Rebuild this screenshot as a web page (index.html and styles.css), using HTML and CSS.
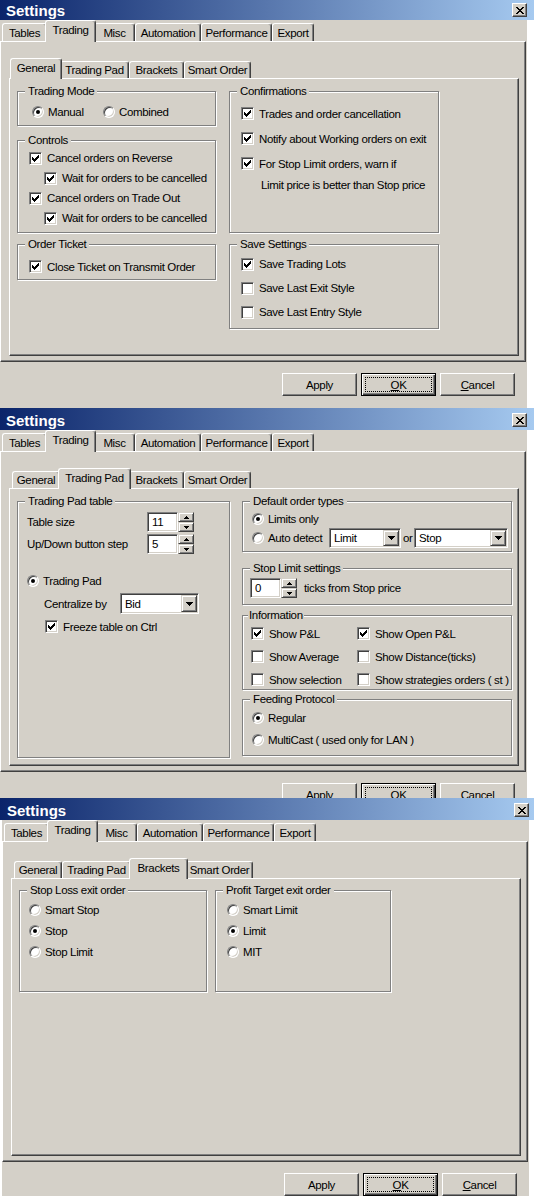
FILE: index.html
```html
<!DOCTYPE html>
<html lang="en">
<head>
<meta charset="utf-8">
<title>Settings</title>
<link rel="stylesheet" href="styles.css">
</head>
<body>

<!-- ================= WINDOW 1 : General ================= -->
<section class="win w1">
  <header class="titlebar">
    <span class="title">Settings</span>
    <span class="close"><svg width="8" height="7" viewBox="0 0 8 7" shape-rendering="crispEdges"><path d="M0 0h2v1H0zM6 0h2v1H6zM1 1h2v1H1zM5 1h2v1H5zM2 2h4v1H2zM3 3h2v1H3zM2 4h4v1H2zM1 5h2v1H1zM5 5h2v1H5zM0 6h2v1H0zM6 6h2v1H6z"/></svg></span>
  </header>
  <div class="wbody">
    <nav class="tabstrip main">
      <div class="tab t-tables">Tables</div>
      <div class="tab t-trading sel">Trading</div>
      <div class="tab t-misc">Misc</div>
      <div class="tab t-automation">Automation</div>
      <div class="tab t-performance">Performance</div>
      <div class="tab t-export">Export</div>
    </nav>
    <div class="panel outer">
      <nav class="tabstrip sub">
        <div class="tab t-general sel">General</div>
        <div class="tab t-pad">Trading Pad</div>
        <div class="tab t-brackets">Brackets</div>
        <div class="tab t-smart">Smart Order</div>
      </nav>
      <div class="panel inner general">
        <div class="col">
          <div class="group g-mode">
            <div class="glabel">Trading Mode</div>
            <div class="gbody">
              <div class="row">
                <div class="opt opt-manual"><span class="rb on"></span>Manual</div>
                <div class="opt"><span class="rb"></span>Combined</div>
              </div>
            </div>
          </div>
          <div class="group g-controls">
            <div class="glabel">Controls</div>
            <div class="gbody">
              <div class="row"><span class="cb"><svg width="7" height="7" viewBox="0 0 7 7" shape-rendering="crispEdges"><path d="M0 2h1v3H0zM1 3h1v3H1zM2 4h1v3H2zM3 3h1v3H3zM4 2h1v3H4zM5 1h1v3H5zM6 0h1v3H6z"/></svg></span>Cancel orders on Reverse</div>
              <div class="row sub1"><span class="cb"><svg width="7" height="7" viewBox="0 0 7 7" shape-rendering="crispEdges"><path d="M0 2h1v3H0zM1 3h1v3H1zM2 4h1v3H2zM3 3h1v3H3zM4 2h1v3H4zM5 1h1v3H5zM6 0h1v3H6z"/></svg></span>Wait for orders to be cancelled</div>
              <div class="row"><span class="cb"><svg width="7" height="7" viewBox="0 0 7 7" shape-rendering="crispEdges"><path d="M0 2h1v3H0zM1 3h1v3H1zM2 4h1v3H2zM3 3h1v3H3zM4 2h1v3H4zM5 1h1v3H5zM6 0h1v3H6z"/></svg></span>Cancel orders on Trade Out</div>
              <div class="row sub1"><span class="cb"><svg width="7" height="7" viewBox="0 0 7 7" shape-rendering="crispEdges"><path d="M0 2h1v3H0zM1 3h1v3H1zM2 4h1v3H2zM3 3h1v3H3zM4 2h1v3H4zM5 1h1v3H5zM6 0h1v3H6z"/></svg></span>Wait for orders to be cancelled</div>
            </div>
          </div>
          <div class="group g-ticket">
            <div class="glabel">Order Ticket</div>
            <div class="gbody">
              <div class="row"><span class="cb"><svg width="7" height="7" viewBox="0 0 7 7" shape-rendering="crispEdges"><path d="M0 2h1v3H0zM1 3h1v3H1zM2 4h1v3H2zM3 3h1v3H3zM4 2h1v3H4zM5 1h1v3H5zM6 0h1v3H6z"/></svg></span>Close Ticket on Transmit Order</div>
            </div>
          </div>
        </div>
        <div class="col">
          <div class="group g-confirm">
            <div class="glabel">Confirmations</div>
            <div class="gbody">
              <div class="row"><span class="cb"><svg width="7" height="7" viewBox="0 0 7 7" shape-rendering="crispEdges"><path d="M0 2h1v3H0zM1 3h1v3H1zM2 4h1v3H2zM3 3h1v3H3zM4 2h1v3H4zM5 1h1v3H5zM6 0h1v3H6z"/></svg></span>Trades and order cancellation</div>
              <div class="row"><span class="cb"><svg width="7" height="7" viewBox="0 0 7 7" shape-rendering="crispEdges"><path d="M0 2h1v3H0zM1 3h1v3H1zM2 4h1v3H2zM3 3h1v3H3zM4 2h1v3H4zM5 1h1v3H5zM6 0h1v3H6z"/></svg></span>Notify about Working orders on exit</div>
              <div class="row"><span class="cb"><svg width="7" height="7" viewBox="0 0 7 7" shape-rendering="crispEdges"><path d="M0 2h1v3H0zM1 3h1v3H1zM2 4h1v3H2zM3 3h1v3H3zM4 2h1v3H4zM5 1h1v3H5zM6 0h1v3H6z"/></svg></span>For Stop Limit orders, warn if</div>
              <div class="row note">Limit price is better than Stop price</div>
            </div>
          </div>
          <div class="group g-save">
            <div class="glabel">Save Settings</div>
            <div class="gbody">
              <div class="row"><span class="cb"><svg width="7" height="7" viewBox="0 0 7 7" shape-rendering="crispEdges"><path d="M0 2h1v3H0zM1 3h1v3H1zM2 4h1v3H2zM3 3h1v3H3zM4 2h1v3H4zM5 1h1v3H5zM6 0h1v3H6z"/></svg></span>Save Trading Lots</div>
              <div class="row"><span class="cb"></span>Save Last Exit Style</div>
              <div class="row"><span class="cb"></span>Save Last Entry Style</div>
            </div>
          </div>
        </div>
      </div>
    </div>
    <div class="btnrow">
      <div class="btn">Apply</div>
      <div class="btn default"><span class="focus"><u>O</u>K</span></div>
      <div class="btn"><u>C</u>ancel</div>
    </div>
  </div>
</section>

<!-- ================= WINDOW 2 : Trading Pad ================= -->
<section class="win w2">
  <header class="titlebar">
    <span class="title">Settings</span>
    <span class="close"><svg width="8" height="7" viewBox="0 0 8 7" shape-rendering="crispEdges"><path d="M0 0h2v1H0zM6 0h2v1H6zM1 1h2v1H1zM5 1h2v1H5zM2 2h4v1H2zM3 3h2v1H3zM2 4h4v1H2zM1 5h2v1H1zM5 5h2v1H5zM0 6h2v1H0zM6 6h2v1H6z"/></svg></span>
  </header>
  <div class="wbody">
    <nav class="tabstrip main">
      <div class="tab t-tables">Tables</div>
      <div class="tab t-trading sel">Trading</div>
      <div class="tab t-misc">Misc</div>
      <div class="tab t-automation">Automation</div>
      <div class="tab t-performance">Performance</div>
      <div class="tab t-export">Export</div>
    </nav>
    <div class="panel outer">
      <nav class="tabstrip sub">
        <div class="tab t-general">General</div>
        <div class="tab t-pad sel">Trading Pad</div>
        <div class="tab t-brackets">Brackets</div>
        <div class="tab t-smart">Smart Order</div>
      </nav>
      <div class="panel inner pad">
        <div class="col">
          <div class="group g-pad">
            <div class="glabel">Trading Pad table</div>
            <div class="gbody">
              <div class="row field">
                <span class="flabel">Table size</span>
                <div class="spin">
                  <div class="edit">11</div>
                  <div class="sbtns">
                    <div class="sbtn"><svg width="5" height="3" viewBox="0 0 5 3" shape-rendering="crispEdges"><path d="M2 0h1v1H2zM1 1h3v1H1zM0 2h5v1H0z"/></svg></div>
                    <div class="sbtn"><svg width="5" height="3" viewBox="0 0 5 3" shape-rendering="crispEdges"><path d="M0 0h5v1H0zM1 1h3v1H1zM2 2h1v1H2z"/></svg></div>
                  </div>
                </div>
              </div>
              <div class="row field">
                <span class="flabel">Up/Down button step</span>
                <div class="spin">
                  <div class="edit">5</div>
                  <div class="sbtns">
                    <div class="sbtn"><svg width="5" height="3" viewBox="0 0 5 3" shape-rendering="crispEdges"><path d="M2 0h1v1H2zM1 1h3v1H1zM0 2h5v1H0z"/></svg></div>
                    <div class="sbtn"><svg width="5" height="3" viewBox="0 0 5 3" shape-rendering="crispEdges"><path d="M0 0h5v1H0zM1 1h3v1H1zM2 2h1v1H2z"/></svg></div>
                  </div>
                </div>
              </div>
              <div class="row radio-row"><span class="rb on"></span>Trading Pad</div>
              <div class="row central">
                <span class="flabel2">Centralize by</span>
                <div class="combo c-bid"><span class="val">Bid</span><span class="dd"><svg width="7" height="4" viewBox="0 0 7 4" shape-rendering="crispEdges"><path d="M0 0h7v1H0zM1 1h5v1H1zM2 2h3v1H2zM3 3h1v1H3z"/></svg></span></div>
              </div>
              <div class="row freeze"><span class="cb"><svg width="7" height="7" viewBox="0 0 7 7" shape-rendering="crispEdges"><path d="M0 2h1v3H0zM1 3h1v3H1zM2 4h1v3H2zM3 3h1v3H3zM4 2h1v3H4zM5 1h1v3H5zM6 0h1v3H6z"/></svg></span>Freeze table on Ctrl</div>
            </div>
          </div>
        </div>
        <div class="col">
          <div class="group g-default">
            <div class="glabel">Default order types</div>
            <div class="gbody">
              <div class="row r1"><span class="rb on"></span>Limits only</div>
              <div class="row r2">
                <div class="opt opt-auto"><span class="rb"></span>Auto detect</div>
                <div class="combo c-limit"><span class="val">Limit</span><span class="dd"><svg width="7" height="4" viewBox="0 0 7 4" shape-rendering="crispEdges"><path d="M0 0h7v1H0zM1 1h5v1H1zM2 2h3v1H2zM3 3h1v1H3z"/></svg></span></div>
                <span class="or">or</span>
                <div class="combo c-stop"><span class="val">Stop</span><span class="dd"><svg width="7" height="4" viewBox="0 0 7 4" shape-rendering="crispEdges"><path d="M0 0h7v1H0zM1 1h5v1H1zM2 2h3v1H2zM3 3h1v1H3z"/></svg></span></div>
              </div>
            </div>
          </div>
          <div class="group g-stoplimit">
            <div class="glabel">Stop Limit settings</div>
            <div class="gbody">
              <div class="row">
                <div class="spin">
                  <div class="edit">0</div>
                  <div class="sbtns">
                    <div class="sbtn"><svg width="5" height="3" viewBox="0 0 5 3" shape-rendering="crispEdges"><path d="M2 0h1v1H2zM1 1h3v1H1zM0 2h5v1H0z"/></svg></div>
                    <div class="sbtn"><svg width="5" height="3" viewBox="0 0 5 3" shape-rendering="crispEdges"><path d="M0 0h5v1H0zM1 1h3v1H1zM2 2h1v1H2z"/></svg></div>
                  </div>
                </div>
                <span class="ticks">ticks from Stop price</span>
              </div>
            </div>
          </div>
          <div class="group g-info">
            <div class="glabel tight">Information</div>
            <div class="gbody">
              <div class="row">
                <div class="opt icol"><span class="cb"><svg width="7" height="7" viewBox="0 0 7 7" shape-rendering="crispEdges"><path d="M0 2h1v3H0zM1 3h1v3H1zM2 4h1v3H2zM3 3h1v3H3zM4 2h1v3H4zM5 1h1v3H5zM6 0h1v3H6z"/></svg></span>Show P&amp;L</div>
                <div class="opt"><span class="cb"><svg width="7" height="7" viewBox="0 0 7 7" shape-rendering="crispEdges"><path d="M0 2h1v3H0zM1 3h1v3H1zM2 4h1v3H2zM3 3h1v3H3zM4 2h1v3H4zM5 1h1v3H5zM6 0h1v3H6z"/></svg></span>Show Open P&amp;L</div>
              </div>
              <div class="row">
                <div class="opt icol"><span class="cb"></span>Show Average</div>
                <div class="opt"><span class="cb"></span>Show Distance(ticks)</div>
              </div>
              <div class="row">
                <div class="opt icol"><span class="cb"></span>Show selection</div>
                <div class="opt"><span class="cb"></span>Show strategies orders ( st )</div>
              </div>
            </div>
          </div>
          <div class="group g-feed">
            <div class="glabel">Feeding Protocol</div>
            <div class="gbody">
              <div class="row"><span class="rb on"></span>Regular</div>
              <div class="row"><span class="rb"></span>MultiCast ( used only for LAN )</div>
            </div>
          </div>
        </div>
      </div>
    </div>
    <div class="btnrow">
      <div class="btn">Apply</div>
      <div class="btn default"><span class="focus"><u>O</u>K</span></div>
      <div class="btn"><u>C</u>ancel</div>
    </div>
  </div>
</section>

<!-- ================= WINDOW 3 : Brackets ================= -->
<section class="win w3">
  <header class="titlebar">
    <span class="title">Settings</span>
    <span class="close"><svg width="8" height="7" viewBox="0 0 8 7" shape-rendering="crispEdges"><path d="M0 0h2v1H0zM6 0h2v1H6zM1 1h2v1H1zM5 1h2v1H5zM2 2h4v1H2zM3 3h2v1H3zM2 4h4v1H2zM1 5h2v1H1zM5 5h2v1H5zM0 6h2v1H0zM6 6h2v1H6z"/></svg></span>
  </header>
  <div class="wbody">
    <nav class="tabstrip main">
      <div class="tab t-tables">Tables</div>
      <div class="tab t-trading sel">Trading</div>
      <div class="tab t-misc">Misc</div>
      <div class="tab t-automation">Automation</div>
      <div class="tab t-performance">Performance</div>
      <div class="tab t-export">Export</div>
    </nav>
    <div class="panel outer">
      <nav class="tabstrip sub">
        <div class="tab t-general">General</div>
        <div class="tab t-pad">Trading Pad</div>
        <div class="tab t-brackets sel">Brackets</div>
        <div class="tab t-smart">Smart Order</div>
      </nav>
      <div class="panel inner brackets">
        <div class="group g-sl">
          <div class="glabel">Stop Loss exit order</div>
          <div class="gbody">
            <div class="row"><span class="rb"></span>Smart Stop</div>
            <div class="row"><span class="rb on"></span>Stop</div>
            <div class="row"><span class="rb"></span>Stop Limit</div>
          </div>
        </div>
        <div class="group g-pt">
          <div class="glabel">Profit Target exit order</div>
          <div class="gbody">
            <div class="row"><span class="rb"></span>Smart Limit</div>
            <div class="row"><span class="rb on"></span>Limit</div>
            <div class="row"><span class="rb"></span>MIT</div>
          </div>
        </div>
      </div>
    </div>
    <div class="btnrow">
      <div class="btn">Apply</div>
      <div class="btn default"><span class="focus"><u>O</u>K</span></div>
      <div class="btn"><u>C</u>ancel</div>
    </div>
  </div>
</section>

</body>
</html>
```

FILE: styles.css
```css
* { box-sizing: border-box; }

html, body { margin: 0; padding: 0; }

body {
  width: 534px;
  height: 1196px;
  overflow: hidden;
  background: #ffffff;
  color: #000000;
  font-family: "Liberation Sans", Arial, sans-serif;
  font-size: 11.5px;
  letter-spacing: -0.35px;
}

/* ---------- windows ---------- */
.win { width: 534px; height: 410px; overflow: hidden; }
.w1 { margin-top: -2px; }
.w2 { height: 390px; }
.w3 { height: 398px; }

.titlebar {
  height: 22px;
  display: flex;
  justify-content: space-between;
  align-items: flex-start;
  padding: 0 7px 0 6px;
  background: linear-gradient(to right, #0a246a 0%, #a6caf0 100%);
  overflow: hidden;
}
.w3 .titlebar { padding-right: 5px; padding-left: 7px; }

.title {
  color: #ffffff;
  font-family: "Liberation Sans", Arial, sans-serif;
  font-weight: bold;
  font-size: 15px;
  letter-spacing: 0;
  line-height: 24px;
  padding-top: 1px;
}

.close {
  margin-top: 5px;
  width: 15px;
  height: 14px;
  background: #d4d0c8;
  border: 1px solid;
  border-color: #ffffff #404040 #404040 #ffffff;
  box-shadow: inset -1px -1px 0 #808080;
  display: flex;
  align-items: center;
  justify-content: center;
}
.close svg, .cb svg, .dd svg, .sbtn svg { display: block; }

.wbody { width: 527px; height: 388px; background: #d4d0c8; }
.w3 .wbody { margin-left: 2px; }

/* ---------- tabs ---------- */
.tabstrip { display: flex; align-items: flex-end; }
.tabstrip.main { height: 21px; padding-left: 2px; }
.tabstrip.sub { height: 20px; padding-left: 3px; }

.tab {
  box-sizing: content-box;
  flex: none;
  background: #d4d0c8;
  border: 1px solid;
  border-bottom: 0;
  border-color: #ffffff #404040 #d4d0c8 #ffffff;
  border-radius: 3px 3px 0 0;
  box-shadow: inset -1px 0 0 #808080;
  text-align: center;
  white-space: nowrap;
}
.main .tab { height: 17px; line-height: 18px; }
.sub .tab { height: 16px; line-height: 16px; }

.tab.sel { position: relative; z-index: 1; margin: 0 -2px -1px; padding: 0 2px; }
.main .tab.sel { height: 21px; line-height: 19px; }
.sub .tab.sel { height: 20px; line-height: 19px; }

.t-tables { width: 43px; }
.t-trading { width: 45px; }
.t-misc { width: 39px; }
.t-automation { width: 64px; }
.t-performance { width: 69px; }
.t-export { width: 40px; }

.t-general { width: 46px; }
.t-pad { width: 67px; }
.t-brackets { width: 53px; }
.t-smart { width: 65px; }

/* ---------- panels ---------- */
.panel {
  border: 1px solid;
  border-color: #ffffff #404040 #404040 #ffffff;
  box-shadow: inset -1px -1px 0 #808080;
}
.outer { width: 526px; height: 321px; padding: 16px 6px 5px 8px; }
.inner { width: 510px; height: 278px; padding: 12px 0 0 7px; }

.general { display: grid; grid-template-columns: 199px 210px; column-gap: 13px; align-items: start; }
.pad { display: grid; grid-template-columns: 213px 270px; column-gap: 12px; align-items: start; }
.brackets { display: flex; gap: 8px; align-items: flex-start; padding-top: 11px; }

.col { display: flex; flex-direction: column; }

/* ---------- group boxes ---------- */
.group {
  border: 1px solid #808080;
  box-shadow: inset 1px 1px 0 #ffffff, 1px 1px 0 #ffffff;
}
.glabel {
  width: fit-content;
  height: 13px;
  line-height: 13px;
  margin: -7px 0 0 7px;
  padding: 0 3px;
  background: #d4d0c8;
  white-space: nowrap;
}
.glabel.tight { margin-left: 5px; padding: 0 1px; }

.row { display: flex; align-items: center; white-space: nowrap; }
.opt { display: flex; align-items: center; height: 100%; }

/* window 1 */
.g-mode { height: 35px; }
.g-mode .gbody { padding: 5px 0 0 14px; }
.g-mode .row { height: 17px; }
.opt-manual { width: 71px; }

.g-controls { height: 93px; margin-top: 14px; }
.g-controls .gbody { padding: 1px 0 0 11px; }
.g-controls .row { height: 20px; }
.sub1 { padding-left: 15px; }

.g-ticket { height: 36px; margin-top: 11px; }
.g-ticket .gbody { padding: 7px 0 0 11px; }
.g-ticket .row { height: 17px; }

.g-confirm { height: 142px; }
.g-confirm .gbody { padding: 3px 0 0 11px; }
.g-confirm .row { height: 25px; }
.g-confirm .row.note { height: 18px; padding-left: 20px; }

.g-save { height: 85px; margin-top: 11px; }
.g-save .gbody { padding: 1px 0 0 11px; }
.g-save .row { height: 24px; }

/* window 2 */
.g-pad { height: 257px; }
.g-pad .gbody { padding: 4px 0 0 9px; }
.field { height: 20px; }
.field + .field { margin-top: 2px; }
.flabel { width: 120px; }
.radio-row { height: 17px; margin-top: 18px; }
.central { height: 21px; margin-top: 4px; padding-left: 17px; }
.flabel2 { width: 76px; }
.freeze { height: 17px; margin-top: 4px; padding-left: 18px; }

.g-default { height: 51px; }
.g-default .gbody { padding: 2px 0 0 9px; }
.g-default .r1 { height: 17px; }
.g-default .r2 { height: 20px; margin-top: 1px; }
.opt-auto { width: 77px; }
.or { width: 11px; }

.g-stoplimit { height: 37px; margin-top: 16px; }
.g-stoplimit .gbody { padding: 3px 0 0 7px; }
.g-stoplimit .row { height: 20px; }
.ticks { margin-left: 7px; }

.g-info { height: 75px; margin-top: 10px; }
.g-info .gbody { padding: 0 0 0 8px; }
.g-info .row { height: 23px; }
.icol { width: 106px; }

.g-feed { height: 57px; margin-top: 9px; }
.g-feed .gbody { padding: 1px 0 0 9px; }
.g-feed .row { height: 22px; }

/* window 3 */
.g-sl { width: 188px; height: 102px; }
.g-sl .gbody { padding: 2px 0 0 9px; }
.g-pt { width: 176px; height: 102px; }
.g-pt .gbody { padding: 2px 0 0 11px; }
.g-sl .row, .g-pt .row { height: 21px; }

/* ---------- controls ---------- */
.cb {
  flex: none;
  width: 13px;
  height: 13px;
  margin-right: 5px;
  background: #ffffff;
  border: 1px solid;
  border-color: #808080 #ffffff #ffffff #808080;
  box-shadow: inset 1px 1px 0 #404040, inset -1px -1px 0 #d4d0c8;
  display: flex;
  align-items: center;
  justify-content: center;
}

.rb {
  flex: none;
  width: 12px;
  height: 12px;
  margin-right: 4px;
  border-radius: 50%;
  background: #ffffff;
  border: 1px solid;
  border-color: #808080 #ffffff #ffffff #808080;
  box-shadow: inset 1px 1px 0 #404040, inset -1px -1px 0 #d4d0c8;
  display: flex;
  align-items: center;
  justify-content: center;
}
.rb.on::after {
  content: "";
  width: 4px;
  height: 4px;
  border-radius: 50%;
  background: #000000;
}

.combo {
  flex: none;
  display: flex;
  padding: 1px;
  background: #ffffff;
  border: 1px solid;
  border-color: #808080 #ffffff #ffffff #808080;
  box-shadow: inset 1px 1px 0 #404040, inset -1px -1px 0 #d4d0c8;
}
.combo .val { flex: 1; padding-left: 3px; display: flex; align-items: center; }
.c-bid { width: 79px; height: 21px; }
.c-limit { width: 72px; height: 20px; margin-right: 2px; }
.c-stop { width: 94px; height: 20px; }

.dd {
  width: 16px;
  background: #d4d0c8;
  border: 1px solid;
  border-color: #d4d0c8 #404040 #404040 #d4d0c8;
  box-shadow: inset 1px 1px 0 #ffffff, inset -1px -1px 0 #808080;
  display: flex;
  align-items: center;
  justify-content: center;
}

.spin { flex: none; display: flex; }
.edit {
  width: 31px;
  height: 20px;
  padding-left: 4px;
  background: #ffffff;
  border: 1px solid;
  border-color: #808080 #ffffff #ffffff #808080;
  box-shadow: inset 1px 1px 0 #404040, inset -1px -1px 0 #d4d0c8;
  display: flex;
  align-items: center;
}
.sbtns { width: 16px; height: 20px; display: flex; flex-direction: column; }
.sbtn {
  flex: 1;
  background: #d4d0c8;
  border: 1px solid;
  border-color: #d4d0c8 #404040 #404040 #d4d0c8;
  box-shadow: inset 1px 1px 0 #ffffff, inset -1px -1px 0 #808080;
  display: flex;
  align-items: center;
  justify-content: center;
}

/* ---------- buttons ---------- */
.btnrow {
  display: flex;
  justify-content: flex-end;
  gap: 4px;
  padding-right: 12px;
  margin-top: 11px;
}
.btn {
  width: 75px;
  height: 23px;
  display: flex;
  align-items: center;
  justify-content: center;
  border: 1px solid;
  border-color: #ffffff #404040 #404040 #ffffff;
  box-shadow: inset -1px -1px 0 #808080;
}
.btn.default {
  border-color: #000000;
  box-shadow: inset 1px 1px 0 #ffffff, inset -1px -1px 0 #404040, inset -2px -2px 0 #808080;
  padding: 3px;
}
.focus {
  flex: 1;
  align-self: stretch;
  border: 1px dotted #000000;
  display: flex;
  align-items: center;
  justify-content: center;
}
u { text-decoration: underline; }
```
